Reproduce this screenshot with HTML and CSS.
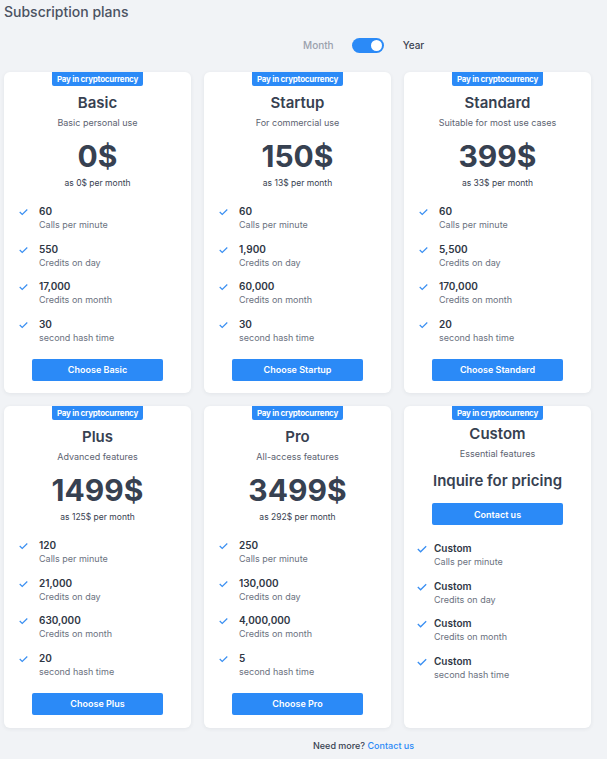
FILE: index.html
```html
<!DOCTYPE html>
<html>
<head>
<meta charset="utf-8">
<link rel="stylesheet" href="styles.css">
</head>
<body>
<div class="page">
  <h1 class="heading">Subscription plans</h1>
  <div class="toggle-row">
    <span class="toggle-label muted">Month</span>
    <span class="switch"><span class="knob"></span></span>
    <span class="toggle-label">Year</span>
  </div>
  <div class="grid">
    <div class="card">
      <div class="badge">Pay in cryptocurrency</div>
      <div class="title">Basic</div>
      <div class="subtitle">Basic personal use</div>
      <div class="price">0$</div>
      <div class="permonth">as 0$ per month</div>
      <ul class="features">
        <li><svg class="check" viewBox="0 0 10 8"><polyline points="0.8,4 3.6,6.8 9.2,1.2"/></svg><div><div class="fv">60</div><div class="fl">Calls per minute</div></div></li>
        <li><svg class="check" viewBox="0 0 10 8"><polyline points="0.8,4 3.6,6.8 9.2,1.2"/></svg><div><div class="fv">550</div><div class="fl">Credits on day</div></div></li>
        <li><svg class="check" viewBox="0 0 10 8"><polyline points="0.8,4 3.6,6.8 9.2,1.2"/></svg><div><div class="fv">17,000</div><div class="fl">Credits on month</div></div></li>
        <li><svg class="check" viewBox="0 0 10 8"><polyline points="0.8,4 3.6,6.8 9.2,1.2"/></svg><div><div class="fv">30</div><div class="fl">second hash time</div></div></li>
      </ul>
      <button class="btn">Choose Basic</button>
    </div>
    <div class="card">
      <div class="badge">Pay in cryptocurrency</div>
      <div class="title">Startup</div>
      <div class="subtitle">For commercial use</div>
      <div class="price">150$</div>
      <div class="permonth">as 13$ per month</div>
      <ul class="features">
        <li><svg class="check" viewBox="0 0 10 8"><polyline points="0.8,4 3.6,6.8 9.2,1.2"/></svg><div><div class="fv">60</div><div class="fl">Calls per minute</div></div></li>
        <li><svg class="check" viewBox="0 0 10 8"><polyline points="0.8,4 3.6,6.8 9.2,1.2"/></svg><div><div class="fv">1,900</div><div class="fl">Credits on day</div></div></li>
        <li><svg class="check" viewBox="0 0 10 8"><polyline points="0.8,4 3.6,6.8 9.2,1.2"/></svg><div><div class="fv">60,000</div><div class="fl">Credits on month</div></div></li>
        <li><svg class="check" viewBox="0 0 10 8"><polyline points="0.8,4 3.6,6.8 9.2,1.2"/></svg><div><div class="fv">30</div><div class="fl">second hash time</div></div></li>
      </ul>
      <button class="btn">Choose Startup</button>
    </div>
    <div class="card">
      <div class="badge">Pay in cryptocurrency</div>
      <div class="title">Standard</div>
      <div class="subtitle">Suitable for most use cases</div>
      <div class="price">399$</div>
      <div class="permonth">as 33$ per month</div>
      <ul class="features">
        <li><svg class="check" viewBox="0 0 10 8"><polyline points="0.8,4 3.6,6.8 9.2,1.2"/></svg><div><div class="fv">60</div><div class="fl">Calls per minute</div></div></li>
        <li><svg class="check" viewBox="0 0 10 8"><polyline points="0.8,4 3.6,6.8 9.2,1.2"/></svg><div><div class="fv">5,500</div><div class="fl">Credits on day</div></div></li>
        <li><svg class="check" viewBox="0 0 10 8"><polyline points="0.8,4 3.6,6.8 9.2,1.2"/></svg><div><div class="fv">170,000</div><div class="fl">Credits on month</div></div></li>
        <li><svg class="check" viewBox="0 0 10 8"><polyline points="0.8,4 3.6,6.8 9.2,1.2"/></svg><div><div class="fv">20</div><div class="fl">second hash time</div></div></li>
      </ul>
      <button class="btn">Choose Standard</button>
    </div>
    <div class="card">
      <div class="badge">Pay in cryptocurrency</div>
      <div class="title">Plus</div>
      <div class="subtitle">Advanced features</div>
      <div class="price">1499$</div>
      <div class="permonth">as 125$ per month</div>
      <ul class="features">
        <li><svg class="check" viewBox="0 0 10 8"><polyline points="0.8,4 3.6,6.8 9.2,1.2"/></svg><div><div class="fv">120</div><div class="fl">Calls per minute</div></div></li>
        <li><svg class="check" viewBox="0 0 10 8"><polyline points="0.8,4 3.6,6.8 9.2,1.2"/></svg><div><div class="fv">21,000</div><div class="fl">Credits on day</div></div></li>
        <li><svg class="check" viewBox="0 0 10 8"><polyline points="0.8,4 3.6,6.8 9.2,1.2"/></svg><div><div class="fv">630,000</div><div class="fl">Credits on month</div></div></li>
        <li><svg class="check" viewBox="0 0 10 8"><polyline points="0.8,4 3.6,6.8 9.2,1.2"/></svg><div><div class="fv">20</div><div class="fl">second hash time</div></div></li>
      </ul>
      <button class="btn">Choose Plus</button>
    </div>
    <div class="card">
      <div class="badge">Pay in cryptocurrency</div>
      <div class="title">Pro</div>
      <div class="subtitle">All-access features</div>
      <div class="price">3499$</div>
      <div class="permonth">as 292$ per month</div>
      <ul class="features">
        <li><svg class="check" viewBox="0 0 10 8"><polyline points="0.8,4 3.6,6.8 9.2,1.2"/></svg><div><div class="fv">250</div><div class="fl">Calls per minute</div></div></li>
        <li><svg class="check" viewBox="0 0 10 8"><polyline points="0.8,4 3.6,6.8 9.2,1.2"/></svg><div><div class="fv">130,000</div><div class="fl">Credits on day</div></div></li>
        <li><svg class="check" viewBox="0 0 10 8"><polyline points="0.8,4 3.6,6.8 9.2,1.2"/></svg><div><div class="fv">4,000,000</div><div class="fl">Credits on month</div></div></li>
        <li><svg class="check" viewBox="0 0 10 8"><polyline points="0.8,4 3.6,6.8 9.2,1.2"/></svg><div><div class="fv">5</div><div class="fl">second hash time</div></div></li>
      </ul>
      <button class="btn">Choose Pro</button>
    </div>
    <div class="card custom">
      <div class="badge">Pay in cryptocurrency</div>
      <div class="title">Custom</div>
      <div class="subtitle">Essential features</div>
      <div class="inquire">Inquire for pricing</div>
      <button class="btn btn-contact">Contact us</button>
      <ul class="features">
        <li><svg class="check" viewBox="0 0 10 8"><polyline points="0.8,4 3.6,6.8 9.2,1.2"/></svg><div><div class="fv">Custom</div><div class="fl">Calls per minute</div></div></li>
        <li><svg class="check" viewBox="0 0 10 8"><polyline points="0.8,4 3.6,6.8 9.2,1.2"/></svg><div><div class="fv">Custom</div><div class="fl">Credits on day</div></div></li>
        <li><svg class="check" viewBox="0 0 10 8"><polyline points="0.8,4 3.6,6.8 9.2,1.2"/></svg><div><div class="fv">Custom</div><div class="fl">Credits on month</div></div></li>
        <li><svg class="check" viewBox="0 0 10 8"><polyline points="0.8,4 3.6,6.8 9.2,1.2"/></svg><div><div class="fv">Custom</div><div class="fl">second hash time</div></div></li>
      </ul>
    </div>
  </div>
  <div class="footer">Need more? <a class="link" href="#">Contact us</a></div>
</div>
</body>
</html>
```
FILE: styles.css
```css
* { box-sizing: border-box; }
html, body { margin: 0; padding: 0; }
body {
  background: #f1f3f6;
  font-family: Inter, "Noto Sans", sans-serif;
  color: #374151;
}
.page {
  width: 607px;
  min-height: 759px;
  padding: 3px 0 0 4px;
}
.heading {
  margin: 0;
  font-size: 14px;
  line-height: 18px;
  font-weight: 500;
  color: #4b5262;
}
.toggle-row {
  display: flex;
  align-items: center;
  margin: 16px 0 0 299px;
  height: 16px;
}
.toggle-label {
  font-size: 10px;
  font-weight: 500;
  color: #3d4452;
}
.toggle-label.muted { color: #9ba1ad; }
.switch {
  display: flex;
  align-items: center;
  justify-content: flex-end;
  width: 32px;
  height: 15px;
  border-radius: 8px;
  background: #2b8af7;
  padding: 0 2px;
  margin: 0 19px 0 18px;
}
.knob {
  width: 11px;
  height: 11px;
  border-radius: 50%;
  background: #fff;
}
.grid {
  display: grid;
  grid-template-columns: repeat(3, 187px);
  grid-template-rows: 321px 322px;
  column-gap: 13px;
  row-gap: 13px;
  margin-top: 19px;
}
.card {
  background: #fff;
  border-radius: 6px;
  box-shadow: 0 1px 4px rgba(30, 40, 60, 0.07);
  display: flex;
  flex-direction: column;
  align-items: center;
  padding: 0 0 12px;
}
.badge {
  background: #2b8af7;
  color: #fff;
  font-size: 8px;
  font-weight: 700;
  line-height: 14px;
  height: 14px;
  padding: 0 5px;
  border-radius: 0 0 2px 2px;
  letter-spacing: -0.25px;
}
.title {
  margin-top: 8px;
  font-size: 15px;
  line-height: 18px;
  font-weight: 600;
  color: #374151;
}
.subtitle {
  margin-top: 5px;
  font-size: 9px;
  line-height: 12px;
  color: #5d6371;
}
.price {
  margin-top: 9px;
  font-size: 30px;
  line-height: 36px;
  font-weight: 700;
  color: #374151;
}
.permonth {
  margin-top: 3px;
  font-size: 8.5px;
  line-height: 12px;
  color: #374151;
}
.features {
  list-style: none;
  margin: 16px 0 0;
  padding: 0 0 0 15px;
  align-self: stretch;
  display: flex;
  flex-direction: column;
  gap: 11.5px;
}
.features li {
  display: flex;
  align-items: flex-start;
  gap: 11px;
}
.check {
  width: 9px;
  height: 8px;
  margin-top: 3px;
  fill: none;
  stroke: #3a8ff2;
  stroke-width: 1.3;
  flex-shrink: 0;
}
.fv {
  font-size: 10px;
  line-height: 13px;
  font-weight: 600;
  color: #2f3745;
}
.fl {
  font-size: 9px;
  line-height: 13px;
  color: #6b7280;
}
.btn {
  margin-top: 15px;
  width: 131px;
  height: 22px;
  border: 0;
  border-radius: 2px;
  background: #2b8af7;
  color: #fff;
  font-family: Inter, "Noto Sans", sans-serif;
  font-size: 9px;
  font-weight: 600;
  padding: 0;
}
.custom .title { margin-top: 5px; }
.inquire {
  margin-top: 12px;
  font-size: 15px;
  line-height: 18px;
  font-weight: 600;
  color: #374151;
}
.btn-contact { margin-top: 13px; }
.custom .features {
  margin-top: 17px;
  padding-left: 13px;
  gap: 11.7px;
}
.custom .features li { gap: 7px; }
.custom .check { width: 10px; }
.footer {
  margin-top: 11px;
  padding-left: 309px;
  font-size: 9px;
  line-height: 14px;
  font-weight: 500;
  color: #374151;
}
.link { color: #2b8af7; text-decoration: none; }
```
